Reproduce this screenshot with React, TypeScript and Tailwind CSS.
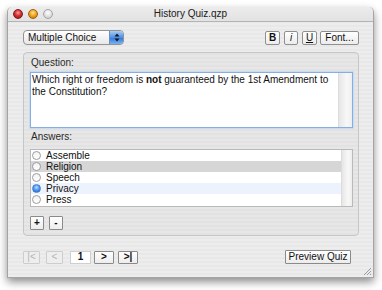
import React from "react";

function Light({ kind }: { kind: "red" | "orange" | "gray" }) {
  const cls =
    kind === "red"
      ? "bg-[radial-gradient(circle_at_50%_35%,#f7a0a0_0%,#d83030_45%,#8e1010_100%)] border-[#7a2020]"
      : kind === "orange"
      ? "bg-[radial-gradient(circle_at_50%_35%,#ffe2a0_0%,#f4a820_45%,#b86a00_100%)] border-[#9a6410]"
      : "bg-[radial-gradient(circle_at_50%_35%,#ffffff_0%,#e2e2e2_50%,#bdbdbd_100%)] border-[#a6a6a6]";
  return <div className={`w-[10px] h-[10px] rounded-full border ${cls}`} />;
}

function FmtBtn({ children, w, className = "" }: { children: React.ReactNode; w: string; className?: string }) {
  return (
    <div
      className={`${w} h-[14px] flex items-center justify-center rounded-[2px] border border-[#8f8f8f] bg-[linear-gradient(#ffffff,#ececec)] text-[10px] leading-none text-[#111] ${className}`}
    >
      {children}
    </div>
  );
}

function NavBtn({ children, w, disabled, className = "" }: { children: React.ReactNode; w: string; disabled?: boolean; className?: string }) {
  return (
    <div
      className={`${w} h-[13px] flex items-center justify-center rounded-[1px] border text-[10px] leading-none ${
        disabled
          ? "border-[#cdcdcd] text-[#b4b4b4] bg-[#eeeeee]"
          : "border-[#8a8a8a] text-[#111] font-bold bg-[linear-gradient(#ffffff,#ededed)]"
      } ${className}`}
    >
      {children}
    </div>
  );
}

function Radio({ checked }: { checked?: boolean }) {
  return checked ? (
    <div className="w-[9px] h-[9px] rounded-full border border-[#4a7fc4] bg-[radial-gradient(circle_at_50%_35%,#b9dcff_0%,#3e8ef0_55%,#2060c0_100%)]" />
  ) : (
    <div className="w-[9px] h-[9px] rounded-full border border-[#9c9c9c] bg-[linear-gradient(#f2f2f2,#ffffff)]" />
  );
}

const answers: { label: string; bg: string; checked?: boolean }[] = [
  { label: "Assemble", bg: "bg-white" },
  { label: "Religion", bg: "bg-[#d6d6d6]" },
  { label: "Speech", bg: "bg-white" },
  { label: "Privacy", bg: "bg-[#edf3fd]", checked: true },
  { label: "Press", bg: "bg-white" },
];

export default function App() {
  return (
    <div className="w-[382px] h-[290px] bg-white overflow-hidden font-['Liberation_Sans',Arial,sans-serif] text-[10px] text-[#1a1a1a] pt-[7px]">
      <div className="ml-[7px] w-[367px] h-[271px] rounded-t-[5px] border-x border-b border-[#a4a4a4] shadow-[0_4px_9px_rgba(0,0,0,0.45)] flex flex-col bg-[repeating-linear-gradient(180deg,#ededed_0px,#ededed_2px,#e8e8e8_2px,#e8e8e8_4px)] relative">
        {/* Title bar */}
        <div className="h-[15px] shrink-0 rounded-t-[5px] border-b border-[#b4b4b4] bg-[linear-gradient(#ececec,#e2e2e2)] flex items-center relative">
          <div className="flex items-center gap-[5px] pl-[5px]">
            <Light kind="red" />
            <Light kind="orange" />
            <Light kind="gray" />
          </div>
          <div className="absolute inset-0 flex items-center justify-center text-[10px] text-[#202020] leading-none">
            History Quiz.qzp
          </div>
        </div>

        {/* Top controls */}
        <div className="mt-[8px] h-[15px] pl-[15px] pr-[14px] flex items-center justify-between">
          <div className="w-[101px] h-[15px] flex items-stretch rounded-[4px] border border-[#939393] bg-[linear-gradient(#ffffff,#e8e8e8)] overflow-hidden">
            <div className="flex-1 flex items-center pl-[4px] text-[10px] leading-none text-[#111]">Multiple Choice</div>
            <div className="w-[14px] flex items-center justify-center bg-[linear-gradient(#a9cdf5,#4d8fe3_50%,#2f74d6_51%,#7ab3f0)] border-l border-[#6a8fc0]">
              <svg width="6" height="9" viewBox="0 0 6 9">
                <path d="M3 0.5 L5.5 3.5 L0.5 3.5 Z" fill="#101820" />
                <path d="M3 8.5 L5.5 5.5 L0.5 5.5 Z" fill="#101820" />
              </svg>
            </div>
          </div>
          <div className="flex items-center">
            <FmtBtn w="w-[15px]" className="font-bold">B</FmtBtn>
            <FmtBtn w="w-[14px]" className="italic ml-[4px]">i</FmtBtn>
            <FmtBtn w="w-[15px]" className="underline ml-[4px]">U</FmtBtn>
            <FmtBtn w="w-[39px]" className="ml-[3px]">Font...</FmtBtn>
          </div>
        </div>

        {/* Group box */}
        <div className="mt-[7px] ml-[15px] w-[336px] h-[184px] rounded-[4px] border border-[#c6c6c6] bg-black/[0.025] pt-[3px] pl-[6px] pr-[5px] flex flex-col">
          <div className="h-[14px] leading-[14px] pl-[1px] text-[#2a2a2a]">Question:</div>
          <div className="mt-[2px] h-[56px] flex border border-[#86aee0] shadow-[0_0_0_1px_#c9dbf1] bg-white">
            <p className="flex-1 pl-[1px] pt-[1px] pr-[4px] leading-[12px] text-[#111]">
              Which right or freedom is <strong className="font-bold">not</strong> guaranteed by the 1st Amendment to the Constitution?
            </p>
            <div className="w-[14px] bg-[linear-gradient(90deg,#e6e6e6,#f8f8f8_60%,#eeeeee)] border-l border-[#dcdcdc]" />
          </div>
          <div className="mt-[2px] h-[14px] leading-[14px] pl-[1px] text-[#2a2a2a]">Answers:</div>
          <div className="mt-[5px] h-[58px] flex border border-[#b9b9b9] bg-white">
            <div className="flex-1 flex flex-col">
              {answers.map((a) => (
                <div key={a.label} className={`h-[11px] flex items-center ${a.bg}`}>
                  <div className="ml-[1px]">
                    <Radio checked={a.checked} />
                  </div>
                  <div className="ml-[5px] leading-none text-[#111]">{a.label}</div>
                </div>
              ))}
            </div>
            <div className="w-[11px] bg-[linear-gradient(90deg,#e6e6e6,#f8f8f8_60%,#eeeeee)] border-l border-[#dcdcdc]" />
          </div>
          <div className="mt-[9px] flex items-center">
            <NavBtn w="w-[14px]" className="h-[14px]">+</NavBtn>
            <NavBtn w="w-[14px]" className="h-[14px] ml-[5px]">-</NavBtn>
          </div>
        </div>

        {/* Bottom bar */}
        <div className="mt-[14px] pl-[15px] pr-[22px] flex items-center justify-between">
          <div className="flex items-center">
            <NavBtn w="w-[17px]" disabled>|&lt;</NavBtn>
            <NavBtn w="w-[17px]" disabled className="ml-[6px]">&lt;</NavBtn>
            <div className="ml-[7px] w-[21px] h-[13px] flex items-center justify-center border border-[#cfcfcf] bg-white font-bold text-[10px] leading-none text-[#111]">
              1
            </div>
            <NavBtn w="w-[20px]" className="ml-[3px]">&gt;</NavBtn>
            <NavBtn w="w-[20px]" className="ml-[4px]">&gt;|</NavBtn>
          </div>
          <div className="w-[66px] h-[14px] flex items-center justify-center rounded-[1px] border border-[#8a8a8a] bg-[linear-gradient(#ffffff,#ececec)] text-[10px] leading-none text-[#111]">
            Preview Quiz
          </div>
        </div>

        {/* Resize grip */}
        <svg className="absolute right-[1px] bottom-[1px]" width="9" height="9" viewBox="0 0 9 9">
          <path d="M8 1 L1 8 M8 4 L4 8 M8 7 L7 8" stroke="#9a9a9a" strokeWidth="1" />
        </svg>
      </div>
    </div>
  );
}
